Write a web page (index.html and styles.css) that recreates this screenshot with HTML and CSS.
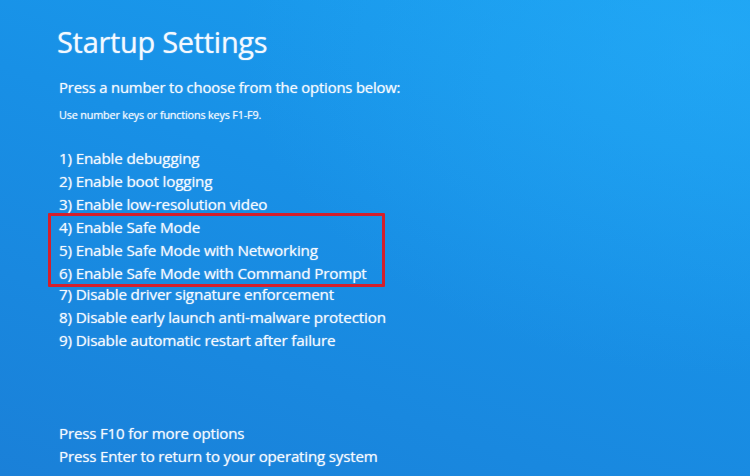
FILE: index.html
```html
<!DOCTYPE html>
<html lang="en">
<head>
<meta charset="utf-8">
<title>Startup Settings</title>
<link rel="stylesheet" href="styles.css">
</head>
<body>
<main class="screen">
  <h1 class="title">Startup Settings</h1>
  <p class="lead">Press a number to choose from the options below:</p>
  <p class="hint">Use number keys or functions keys F1-F9.</p>
  <ul class="options">
    <li>1) Enable debugging</li>
    <li>2) Enable boot logging</li>
    <li>3) Enable low-resolution video</li>
    <li class="group">
      <ul class="highlight">
        <li>4) Enable Safe Mode</li>
        <li>5) Enable Safe Mode with Networking</li>
        <li>6) Enable Safe Mode with Command Prompt</li>
      </ul>
    </li>
    <li>7) Disable driver signature enforcement</li>
    <li>8) Disable early launch anti-malware protection</li>
    <li>9) Disable automatic restart after failure</li>
  </ul>
  <div class="footer">
    <p>Press F10 for more options</p>
    <p>Press Enter to return to your operating system</p>
  </div>
</main>
</body>
</html>
```
FILE: styles.css
```css
html, body {
  margin: 0;
  padding: 0;
  width: 750px;
  height: 476px;
  overflow: hidden;
}
body {
  font-family: "Open Sans", "Noto Sans", "DejaVu Sans", sans-serif;
  color: #f4f9ff;
  background: #1a8ee6;
}
.screen {
  box-sizing: border-box;
  width: 750px;
  height: 476px;
  padding: 22px 0 0 59px;
  background:
    radial-gradient(ellipse 600px 420px at 720px 40px, rgba(40, 175, 250, 0.5), rgba(40, 175, 250, 0) 80%),
    linear-gradient(200deg, #1aa0f0 0%, #1890e6 45%, #1a80d8 100%);
  display: flex;
  flex-direction: column;
  text-shadow: 0 0 1px rgba(255, 255, 255, 0.5), 0 0 2px rgba(255, 255, 255, 0.2);
}
.title {
  margin: 0 0 0 -2px;
  font-weight: 400;
  font-size: 29px;
  line-height: 40px;
  letter-spacing: -0.3px;
}
.lead {
  margin: 14px 0 0;
  font-size: 14.9px;
  line-height: 22px;
  letter-spacing: -0.2px;
}
.hint {
  margin: 10px 0 0;
  font-size: 10.9px;
  line-height: 14px;
  letter-spacing: -0.2px;
}
.options, .highlight {
  list-style: none;
  margin: 0;
  padding: 0;
}
.options {
  margin-top: 25px;
}
.options li {
  font-size: 15.3px;
  line-height: 22.9px;
  letter-spacing: -0.2px;
}
.highlight {
  margin: -3px 0 -4px -11px;
  padding: 0 0 0 8px;
  width: 323px;
  border: 3px solid #d41f2c;
  border-radius: 1px;
}
.footer {
  margin-top: auto;
  padding-bottom: 8px;
}
.footer p {
  margin: 0;
  font-size: 15.15px;
  line-height: 22.9px;
  letter-spacing: -0.2px;
}
```
